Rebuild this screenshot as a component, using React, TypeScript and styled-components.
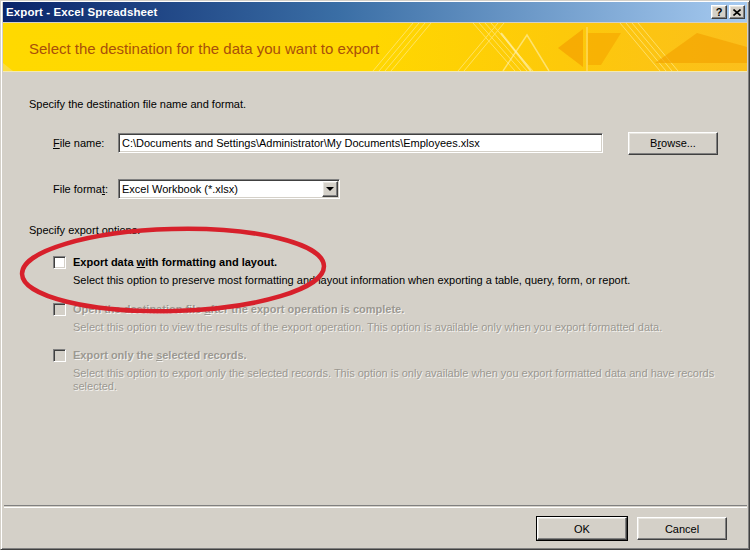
import React from "react";
import styled, { createGlobalStyle, css } from "styled-components";

const GlobalStyle = createGlobalStyle`
  html, body {
    margin: 0;
    padding: 0;
    background: #d4d0c8;
  }
  body {
    font-family: "Liberation Sans", Arial, sans-serif;
    font-size: 11px;
    color: #000;
  }
`;

const raised = css`
  border: 1px solid;
  border-color: #fff #404040 #404040 #fff;
  box-shadow: inset -1px -1px #808080, inset 1px 1px #e8e6e0;
  background: #d4d0c8;
`;

const sunken = css`
  border: 1px solid;
  border-color: #808080 #fff #fff #808080;
  box-shadow: inset 1px 1px #404040, inset -1px -1px #d4d0c8;
  background: #fff;
`;

const Window = styled.div`
  position: relative;
  width: 750px;
  height: 550px;
  box-sizing: border-box;
  display: flex;
  flex-direction: column;
  background: #d4d0c8;
  border: 1px solid;
  border-color: #d4d0c8 #404040 #404040 #d4d0c8;
  box-shadow: inset 1px 1px #fff, inset -1px -1px #808080;
  padding: 1px 2px 2px 2px;
  overflow: hidden;
`;

const TitleBar = styled.div`
  height: 20px;
  display: flex;
  align-items: center;
  justify-content: space-between;
  padding: 0 2px 0 3px;
  background: linear-gradient(to right, #0a246a 0%, #3a6ea5 45%, #a6caf0 100%);
`;

const Title = styled.span`
  color: #fff;
  font-weight: bold;
  font-size: 11.5px;
  letter-spacing: 0.1px;
`;

const TitleButtons = styled.div`
  display: flex;
  gap: 2px;
`;

const TitleButton = styled.div`
  ${raised};
  width: 14px;
  height: 12px;
  display: flex;
  align-items: center;
  justify-content: center;
  font-weight: bold;
  font-size: 11px;
  line-height: 1;
`;

const Banner = styled.div`
  position: relative;
  height: 48px;
  margin-top: 1px;
  display: flex;
  align-items: center;
  padding-left: 26px;
  background: linear-gradient(to right, #ffd900 0%, #ffd700 50%, #fdc90a 75%, #fbbf1c 100%);
  border-bottom: 1px solid #f3e9b0;
  overflow: hidden;
`;

const BannerArt = styled.svg`
  position: absolute;
  inset: 0;
  width: 100%;
  height: 100%;
`;

const BannerText = styled.span`
  position: relative;
  color: #a9500a;
  font-size: 15px;
  margin-top: 2px;
`;

const Body = styled.div`
  flex: 1;
  display: flex;
  flex-direction: column;
  padding: 26px 0 0 26px;
`;

const Intro = styled.div<{ $gap: number }>`
  line-height: 13px;
  margin-bottom: ${(p) => p.$gap}px;
`;

const FieldRow = styled.div<{ $gap: number }>`
  display: flex;
  align-items: center;
  padding-left: 24px;
  margin-bottom: ${(p) => p.$gap}px;
  height: 22px;
`;

const FieldLabel = styled.span`
  width: 65px;
`;

const TextBox = styled.div`
  ${sunken};
  box-sizing: border-box;
  width: 485px;
  height: 20px;
  padding: 0 3px;
  display: flex;
  align-items: center;
  white-space: nowrap;
`;

const Spacer = styled.div<{ $w: number }>`
  width: ${(p) => p.$w}px;
  flex: none;
`;

const Button = styled.div<{ $default?: boolean }>`
  ${raised};
  box-sizing: border-box;
  width: 90px;
  height: 23px;
  display: flex;
  align-items: center;
  justify-content: center;
  ${(p) =>
    p.$default &&
    css`
      outline: 1px solid #000;
      outline-offset: 0;
    `}
`;

const Select = styled.div`
  ${sunken};
  box-sizing: border-box;
  width: 222px;
  height: 20px;
  padding-left: 3px;
  display: flex;
  align-items: center;
  justify-content: space-between;
`;

const DropButton = styled.div`
  ${raised};
  box-sizing: border-box;
  width: 16px;
  height: 16px;
  margin-right: 1px;
  display: flex;
  align-items: center;
  justify-content: center;
  &::after {
    content: "";
    border-left: 4px solid transparent;
    border-right: 4px solid transparent;
    border-top: 4px solid #000;
  }
`;

const Options = styled.div`
  display: flex;
  flex-direction: column;
  gap: 15.5px;
  padding-left: 24px;
`;

const Option = styled.div`
  display: flex;
  gap: 7px;
`;

const CheckBox = styled.div<{ $disabled?: boolean }>`
  ${sunken};
  box-sizing: border-box;
  flex: none;
  width: 13px;
  height: 13px;
  background: ${(p) => (p.$disabled ? "#d4d0c8" : "#fff")};
`;

const OptionText = styled.div<{ $disabled?: boolean }>`
  display: flex;
  flex-direction: column;
  gap: 5px;
  ${(p) =>
    p.$disabled &&
    css`
      color: #9b9891;
      text-shadow: 1px 1px 0 rgba(255, 255, 255, 0.75);
    `}
`;

const OptionLabel = styled.div`
  font-weight: bold;
  line-height: 13px;
`;

const OptionDesc = styled.div`
  line-height: 13px;
  width: 650px;
`;

const Footer = styled.div`
  display: flex;
  flex-direction: column;
  padding: 0 0 7px 1px;
`;

const Separator = styled.div`
  height: 1px;
  border-top: 1px solid #808080;
  border-bottom: 1px solid #fff;
  margin-bottom: 9px;
`;

const ButtonRow = styled.div`
  display: flex;
  justify-content: flex-end;
  gap: 10px;
  padding-right: 20px;
`;

const Key = styled.u`
  text-decoration-thickness: 1px;
  text-underline-offset: 1px;
`;

const Annotation = styled.svg`
  position: absolute;
  left: 0;
  top: 0;
  width: 750px;
  height: 550px;
  pointer-events: none;
`;

export default function App() {
  return (
    <>
      <GlobalStyle />
      <Window>
        <TitleBar>
          <Title>Export - Excel Spreadsheet</Title>
          <TitleButtons>
            <TitleButton>?</TitleButton>
            <TitleButton>
              <svg width="8" height="7" viewBox="0 0 8 7">
                <path d="M0.5 0.5 L7.5 6.5 M7.5 0.5 L0.5 6.5" stroke="#000" strokeWidth="1.6" />
              </svg>
            </TitleButton>
          </TitleButtons>
        </TitleBar>

        <Banner>
          <BannerArt viewBox="0 0 744 48" preserveAspectRatio="none">
            <g stroke="#ffe98a" strokeWidth="1" opacity="0.7">
              <path d="M370 48 L410 0 M376 48 L416 0 M382 48 L422 0 M388 48 L428 0" />
              <path d="M455 48 L495 0 M461 48 L501 0" />
              <path d="M470 0 L512 48 M476 0 L518 48 M482 0 L524 48 M488 0 L530 48" />
              <path d="M617 0 L657 48 M623 0 L663 48 M629 0 L669 48 M635 0 L675 48" />
            </g>
            <path d="M498 10 L528 48" stroke="#fff2b0" strokeWidth="2" opacity="0.7" />
            <path d="M500 48 L524 12 L546 48" stroke="#fff2b0" strokeWidth="1.5" fill="none" opacity="0.6" />
            <path d="M584 4 L584 48" stroke="#ffe38a" strokeWidth="1.5" opacity="0.6" />
            <polygon points="555,25 580,6 580,44" fill="#f4a000" opacity="0.7" />
            <polygon points="585,10 618,10 598,42 585,42" fill="#f6a800" opacity="0.65" />
            <polygon points="652,40 694,10 744,24 744,40" fill="#f3a200" opacity="0.65" />
            <polygon points="0,40 10,48 0,48" fill="#f8e070" opacity="0.6" />
          </BannerArt>
          <BannerText>Select the destination for the data you want to export</BannerText>
        </Banner>

        <Body>
          <Intro $gap={21}>Specify the destination file name and format.</Intro>
          <FieldRow $gap={24}>
            <FieldLabel>
              <Key>F</Key>ile name:
            </FieldLabel>
            <TextBox>C:\Documents and Settings\Administrator\My Documents\Employees.xlsx</TextBox>
            <Spacer $w={25} />
            <Button>
              B<Key>r</Key>owse...
            </Button>
          </FieldRow>
          <FieldRow $gap={24}>
            <FieldLabel>
              File forma<Key>t</Key>:
            </FieldLabel>
            <Select>
              Excel Workbook (*.xlsx)
              <DropButton />
            </Select>
          </FieldRow>
          <Intro $gap={19}>Specify export options.</Intro>
          <Options>
            <Option>
              <CheckBox />
              <OptionText>
                <OptionLabel>
                  Export data <Key>w</Key>ith formatting and layout.
                </OptionLabel>
                <OptionDesc>
                  Select this option to preserve most formatting and layout information when exporting a table, query, form, or report.
                </OptionDesc>
              </OptionText>
            </Option>
            <Option>
              <CheckBox $disabled />
              <OptionText $disabled>
                <OptionLabel>
                  Open the destination file <Key>a</Key>fter the export operation is complete.
                </OptionLabel>
                <OptionDesc>
                  Select this option to view the results of the export operation. This option is available only when you export formatted data.
                </OptionDesc>
              </OptionText>
            </Option>
            <Option>
              <CheckBox $disabled />
              <OptionText $disabled>
                <OptionLabel>
                  Export only the <Key>s</Key>elected records.
                </OptionLabel>
                <OptionDesc>
                  Select this option to export only the selected records. This option is only available when you export formatted data and have records selected.
                </OptionDesc>
              </OptionText>
            </Option>
          </Options>
        </Body>

        <Footer>
          <Separator />
          <ButtonRow>
            <Button $default>OK</Button>
            <Button>Cancel</Button>
          </ButtonRow>
        </Footer>

        <Annotation viewBox="0 0 750 550">
          <ellipse
            cx="172"
            cy="269"
            rx="151"
            ry="41"
            transform="rotate(-1.5 172 269)"
            fill="none"
            stroke="#d7202b"
            strokeWidth="4.5"
          />
        </Annotation>
      </Window>
    </>
  );
}
